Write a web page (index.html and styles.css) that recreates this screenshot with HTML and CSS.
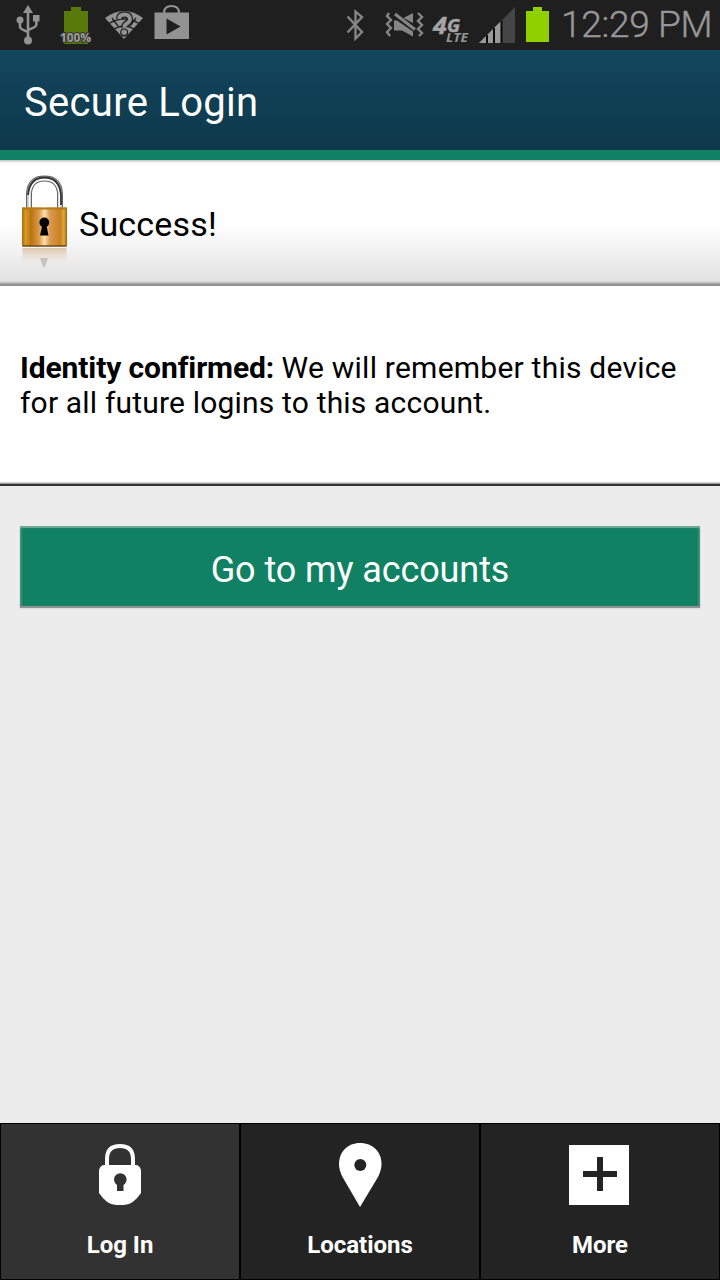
FILE: index.html
```html
<!DOCTYPE html>
<html lang="en">
<head>
<meta charset="utf-8">
<title>Secure Login</title>
<link rel="stylesheet" href="styles.css">
</head>
<body>
<div class="screen">
  <div class="status">
    <svg class="status-left" width="200" height="50" viewBox="0 0 200 50">
      <g fill="#929292" stroke="none">
        <path d="M28 5l5 8h-10z"/>
        <circle cx="28" cy="40.500" r="4"/>
        <circle cx="20" cy="20" r="3.500"/>
        <path d="M33 15h6.500v6.500H33z"/>
      </g>
      <path d="M28 11v28M20 21v6q0 2 8 5M36.300 20v5q0 2-8.300 5" fill="none" stroke="#929292" stroke-width="2.600"/>
      <path d="M71 7h10v4h7v33H64V11h7z" fill="#587a0b"/>
      <text class="percent" x="60" y="42" textLength="31">100%</text>
      <path d="M105 18q19-14 38 0L124 39z" fill="#929292"/>
      <path d="M109 23.500q15-9 30 0M114 29q10-6 20 0M112 18l6 8M136 18l-6 8" fill="none" stroke="#1f1f1f" stroke-width="1.300"/>
      <path d="M119 19q.5-4.500 5.500-4.500t5.500 4.500q0 2.500-3 4.300t-2.500 4.200" fill="none" stroke="#1f1f1f" stroke-width="6.400"/>
      <circle cx="124.200" cy="32.500" r="4" fill="#1f1f1f"/>
      <path d="M119 19q.5-4.500 5.500-4.500t5.500 4.500q0 2.500-3 4.300t-2.500 4.200" fill="none" stroke="#929292" stroke-width="3.800"/>
      <circle cx="124.200" cy="32.300" r="2.700" fill="#929292"/>
      <path d="M164 13q0-7 7.500-7t7.500 7" fill="none" stroke="#929292" stroke-width="2"/>
      <path d="M154.500 12.500h34.500v26.500h-34.500z" fill="#929292"/>
      <path d="M166.500 18.500l14 8-14 8z" fill="#1f1f1f"/>
    </svg>
    <svg class="status-right" width="220" height="50" viewBox="335 0 220 50">
      <path d="M347.500 16.500l14.500 15.500-6.500 6.500V11.500l6.500 5.500-14.500 15.500" fill="none" stroke="#858585" stroke-width="2.400"/>
      <path d="M389 13l-2 3 4 4-4 4 4 4-4 4 3 4M418 13l4 4-4 4 4 4-4 4 4 4-3 3" fill="none" stroke="#858585" stroke-width="2.400"/>
      <path d="M394 20.500h3l16 11v5l-11-6h-8zM403.500 18l9.500-5v10z" fill="#858585"/>
      <path d="M395 14l20 15.500" fill="none" stroke="#858585" stroke-width="3"/>
      <text class="net" x="433" y="34" textLength="27" lengthAdjust="spacingAndGlyphs"><tspan class="four">4</tspan><tspan dy="-2">G</tspan></text>
      <text class="lte" x="446" y="42" textLength="22" lengthAdjust="spacingAndGlyphs">LTE</text>
      <path d="M479 43L515 7v36z" fill="#454545"/>
      <path d="M479 43l23-23v23z" fill="#999"/>
      <path d="M487 35v8M494 28v15M501.500 20.500V43" stroke="#080808" stroke-width="2"/>
      <path d="M533 7h9v4h7v31h-23V11h7z" fill="#90cf00"/>
    </svg>
    <span class="clock">12:29 PM</span>
  </div>
  <header class="header"><h1 class="title">Secure Login</h1></header>
  <section class="result">
    <svg class="gold-lock" width="50" height="100" viewBox="0.5 0 50 100">
      <defs>
        <linearGradient id="gold"><stop stop-color="#a76c08"/><stop offset=".08" stop-color="#d79a27"/><stop offset=".2" stop-color="#b9740f"/><stop offset=".38" stop-color="#dc9a4a"/><stop offset=".5" stop-color="#ffe2ad"/><stop offset=".62" stop-color="#dc9850"/><stop offset=".85" stop-color="#c88122"/><stop offset=".93" stop-color="#e0aa3c"/><stop offset="1" stop-color="#9d6207"/></linearGradient>
        <linearGradient id="reflection" x2="0" y2="1"><stop stop-color="#c9a06e" stop-opacity=".55"/><stop offset="1" stop-color="#fff" stop-opacity="0"/></linearGradient>
      </defs>
      <path d="M8.500 33V18.500Q9.500 3.500 24 3.500t15.500 15V33" fill="none" stroke="#666" stroke-width="6"/>
      <path d="M8.500 33V18.500Q9.500 3.500 24 3.500t15.500 15V33" fill="none" stroke="#c4c4c4" stroke-width="4"/>
      <path d="M9 33V18.500Q11 4.500 24 4.500t15 14V33" fill="none" stroke="#fff" stroke-width="1.600"/>
      <path d="M7.500 20Q9 2.500 24 2.500T40.500 20v10" fill="none" stroke="#333" stroke-width="1.800"/>
      <path d="M1.500 32.500h45V71h-45z" fill="url(#gold)"/>
      <path d="M2 33.500h44" stroke="#b47a18" stroke-width="2"/>
      <path d="M2 71h44" stroke="#6c4815" stroke-width="1.600"/>
      <circle cx="23.800" cy="47.500" r="4.900"/>
      <path d="M22 49h3.800l2.200 11.500h-8.500z"/>
      <path d="M2 73h44v21H2z" fill="url(#reflection)"/>
      <path d="M19.500 83h8l-3 9h-2z" fill="#aaa" opacity=".6"/>
    </svg>
    <h2 class="success">Success!</h2>
  </section>
  <section class="message"><p class="copy"><b class="strong">Identity confirmed:</b> <span class="line-one">We will remember this device</span><br><span class="line-two">for all future logins to this account.</span></p></section>
  <main class="content"><button class="accounts" type="button"><span>Go to my accounts</span></button></main>
  <nav class="tabs">
    <a class="tab active">
      <svg width="60" height="68" viewBox="0 0 60 68">
        <path d="M17 26V18q0-13 13-13t13 13v8" fill="none" stroke="#fff" stroke-width="4"/>
        <path d="M13 24h34q4 2 4 6v22Q43 64 34 64h-8Q17 64 9 52V30q0-4 4-6z" fill="#fff"/>
        <circle cx="30.300" cy="38.500" r="6.300" fill="#323232"/><path d="M27 42h6.500v8H27z" fill="#323232"/>
      </svg><span class="label">Log In</span>
    </a>
    <a class="tab">
      <svg width="60" height="68" viewBox="0 0 60 68">
        <path d="M30 2C17.500 2 9 11 9 23q0 6 3.500 13L30 66l18-30q3.500-7 3.500-13C51.500 11 43 2 30 2z" fill="#fff"/>
        <circle cx="30.300" cy="24" r="6" fill="#232323"/>
      </svg><span class="label">Locations</span>
    </a>
    <a class="tab">
      <svg width="60" height="68" viewBox="0 0 60 68">
        <path d="M-1 4h60v60H-1z" fill="#fff"/><path d="M27 16h6v14h14v6H33v14h-6V36H13v-6h14z" fill="#232323"/>
      </svg><span class="label">More</span>
    </a>
  </nav>
</div>
</body>
</html>
```
FILE: styles.css
```css
* { box-sizing: border-box; }
body { margin: 0; font-family: Roboto, sans-serif; }
svg { display: block; flex-shrink: 0; overflow: visible; }
.screen { width: 720px; height: 1280px; display: flex; flex-direction: column; background: #ececec; }
.status { height: 50px; display: flex; background: #1f1f1f; color: #979797; }
.status-right { margin-left: 135px; }
.clock { width: 158px; padding-left: 6px; font-size: 37px; line-height: 50px; font-weight: 300; letter-spacing: -.3px; white-space: nowrap; -webkit-text-stroke: .4px #979797; }
.percent { font: bold 12px "Open Sans", sans-serif; fill: #a0a0a0; stroke: #333; stroke-width: 2px; paint-order: stroke; }
.net { font: italic bold 18px "Open Sans", sans-serif; fill: #a5a5a5; stroke: #a5a5a5; stroke-width: .5px; }
.four { font-size: 24px; }
.lte { font: italic bold 12px "Open Sans", sans-serif; fill: #959595; }
.header { height: 110px; display: flex; align-items: center; padding: 6px 24px 0; background: linear-gradient(#12465d, #0e384b) 0 0 / 100% 100px no-repeat; border-bottom: 10px solid #118163; }
.title { margin: 0; color: #fff; font-size: 40px; line-height: 48px; font-weight: 400; letter-spacing: .3px; }
.result { height: 126px; display: flex; padding: 15px 20px 0 21px; background: linear-gradient(#bbb 0, #eee 2px, #fff 4px, #fff 50%, #e2e2e2 121px, #bbb 123px, #929292 124px, #929292); }
.success { margin: 29px 0 0 8px; font-size: 34px; line-height: 40px; font-weight: 400; letter-spacing: .2px; }
.message { height: 200px; padding: 64px 20px 0; background: linear-gradient(#fff 196px, #aaa 197px, #929292 198px, #333 198px); }
.copy { margin: 0; font-size: 30px; line-height: 35px; white-space: nowrap; }
.strong { letter-spacing: -.1px; }
.line-one { letter-spacing: .23px; }
.line-two { letter-spacing: .18px; }
.content { flex: 1; padding: 40px 20px; }
.accounts { width: 680px; height: 80px; display: flex; align-items: center; justify-content: center; padding: 8px 0 0; border: 0; background: #118163; box-shadow: inset 0 2px 1px #70aa98, inset 2px 0 1px #408e78, inset -2px 0 1px #408e78, 0 2px 1px #929292; color: #fff; font: 36px Roboto, sans-serif; letter-spacing: -.1px; }
.tabs { height: 157px; display: grid; grid-template-columns: repeat(3, 1fr); background: #000; }
.tab { display: flex; flex-direction: column; align-items: center; padding-top: 17px; border: 1px solid #000; background: #232323; color: #fff; }
.active { background: #323232; }
.label { margin-top: 21px; font-size: 24px; line-height: 30px; font-weight: 700; }
```
